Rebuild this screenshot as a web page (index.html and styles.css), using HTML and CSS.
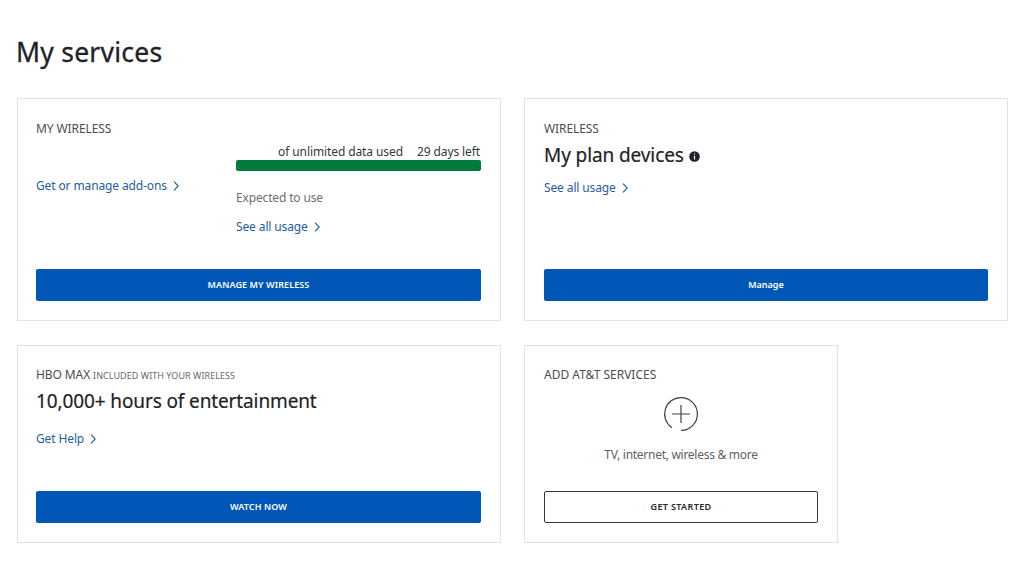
FILE: index.html
```html
<!DOCTYPE html>
<html lang="en">
<head>
  <meta charset="UTF-8" />
  <title>My services</title>
  <link rel="stylesheet" href="styles.css">
</head>
<body>
  <div class="page">
    <h1>My services</h1>

    <div class="services">
      <div class="card card-left card-top">
        <div class="label">MY WIRELESS</div>
        <div class="usage-row">
          <div class="usage-links">
            <a class="link" href="#">Get or manage add-ons<svg class="chevron" viewBox="0 0 6 10"><path d="M1 .6 5.2 5 1 9.4" /></svg></a>
          </div>
          <div class="usage">
            <div class="usage-text">
              <span>of unlimited data used</span>
              <span>29 days left</span>
            </div>
            <div class="bar"></div>
            <div class="expected">Expected to use</div>
            <a class="link" href="#">See all usage<svg class="chevron" viewBox="0 0 6 10"><path d="M1 .6 5.2 5 1 9.4" /></svg></a>
          </div>
        </div>
        <button class="btn">MANAGE MY WIRELESS</button>
      </div>

      <div class="card card-top">
        <div class="label">WIRELESS</div>
        <h2>My plan devices<svg class="info" viewBox="0 0 11 11"><circle cx="5.5" cy="5.5" r="5.3" /><path d="M5.5 2.5v1M5.5 4.7v3.8" /></svg></h2>
        <a class="link" href="#">See all usage<svg class="chevron" viewBox="0 0 6 10"><path d="M1 .6 5.2 5 1 9.4" /></svg></a>
        <button class="btn btn-plain">Manage</button>
      </div>

      <div class="card card-left">
        <div class="label">HBO MAX <small>INCLUDED WITH YOUR WIRELESS</small></div>
        <h2 class="title-hours">10,000+ hours of entertainment</h2>
        <a class="link" href="#">Get Help<svg class="chevron" viewBox="0 0 6 10"><path d="M1 .6 5.2 5 1 9.4" /></svg></a>
        <button class="btn">WATCH NOW</button>
      </div>

      <div class="card card-add">
        <div class="label label-add">ADD AT&amp;T SERVICES</div>
        <svg class="plus" viewBox="0 0 36 36"><path d="M18 34.4A16.4 16.4 0 0 0 18 1.6A16.4 16.4 0 0 0 9 31.7M18 9v18M9 18h18" /></svg>
        <p class="more">TV, internet, wireless &amp; more</p>
        <button class="btn btn-outline">GET STARTED</button>
      </div>
    </div>
  </div>
</body>
</html>
```

FILE: styles.css
```css
body {
  font-family: 'Noto Sans', sans-serif;
  background-color: #fff;
  color: #1d2329;
  margin: 0;
}

.page {
  padding: 34px 16px 0;
}

h1 {
  font-size: 26.5px;
  font-weight: 400;
  line-height: 36px;
  letter-spacing: 0.25px;
  margin: 0 0 28px;
  -webkit-text-stroke: 0.3px;
}

.services {
  display: grid;
  grid-template-columns: 484px 484px;
  grid-template-rows: 223px 198px;
  gap: 24px 23px;
  margin-left: 1px;
}

.card {
  box-sizing: border-box;
  display: flex;
  flex-direction: column;
  align-items: flex-start;
  border: 1px solid #e3e3e3;
  padding: 20px 19px 19px;
}

.card-top {
  padding-top: 21px;
}

.card-left {
  padding-left: 18px;
}

.card-add {
  width: 314px;
}

.label {
  font-size: 12px;
  line-height: 18px;
  letter-spacing: -0.1px;
  color: #4a4e52;
  white-space: nowrap;
}

.label small {
  font-size: 9px;
  letter-spacing: 0.04px;
  color: #66696c;
}

.label-add {
  letter-spacing: 0;
}

h2 {
  font-size: 19px;
  font-weight: 400;
  line-height: 26px;
  letter-spacing: -0.1px;
  margin: 4px 0 11px;
  white-space: nowrap;
  -webkit-text-stroke: 0.2px;
}

.title-hours {
  margin: 3px 0 16px;
  letter-spacing: -0.12px;
}

.info {
  width: 11px;
  height: 11px;
  margin-left: 5px;
  vertical-align: 0;
}

.info circle {
  fill: #1d2329;
}

.info path {
  stroke: #fff;
  stroke-width: 1.2;
}

.link {
  display: flex;
  align-items: center;
  font-size: 12px;
  line-height: 18px;
  letter-spacing: -0.12px;
  color: #1f5d9f;
  text-decoration: none;
  white-space: nowrap;
}

.chevron {
  width: 6px;
  height: 10px;
  margin-left: 6px;
}

.chevron path {
  fill: none;
  stroke: #1f5d9f;
  stroke-width: 1.1;
}

.usage-row {
  display: flex;
  width: 100%;
}

.usage-links {
  width: 200px;
  padding-top: 39px;
}

.usage {
  flex: 1;
  padding-top: 5px;
}

.usage-text {
  display: flex;
  justify-content: flex-end;
  gap: 14px;
  margin-right: 1px;
  font-size: 12px;
  line-height: 18px;
  letter-spacing: -0.1px;
  color: #34383c;
  white-space: nowrap;
}

.bar {
  height: 11px;
  margin-top: -1px;
  border-radius: 2px;
  background-color: #007a3e;
}

.expected {
  margin: 18px 0 11px;
  font-size: 12px;
  line-height: 18px;
  letter-spacing: -0.15px;
  color: #6c6f72;
}

.btn {
  width: 100%;
  height: 32px;
  margin-top: auto;
  padding: 0 0 1px;
  border: none;
  border-radius: 2px;
  background-color: #0057b8;
  color: white;
  font-family: inherit;
  font-size: 9px;
  font-weight: 600;
  letter-spacing: 0.1px;
  cursor: pointer;
}

.btn-plain {
  letter-spacing: 0;
}

.plus {
  align-self: center;
  width: 36px;
  height: 36px;
  margin-top: 12px;
}

.plus path {
  fill: none;
  stroke: #3c4044;
  stroke-width: 1.2;
}

.more {
  align-self: center;
  margin: 14px 0 0;
  font-size: 12px;
  line-height: 18px;
  letter-spacing: -0.28px;
  color: #5f6265;
  white-space: nowrap;
}

.btn-outline {
  border: 1px solid #34383c;
  background-color: white;
  color: #24282c;
  letter-spacing: 0.35px;
}
```
